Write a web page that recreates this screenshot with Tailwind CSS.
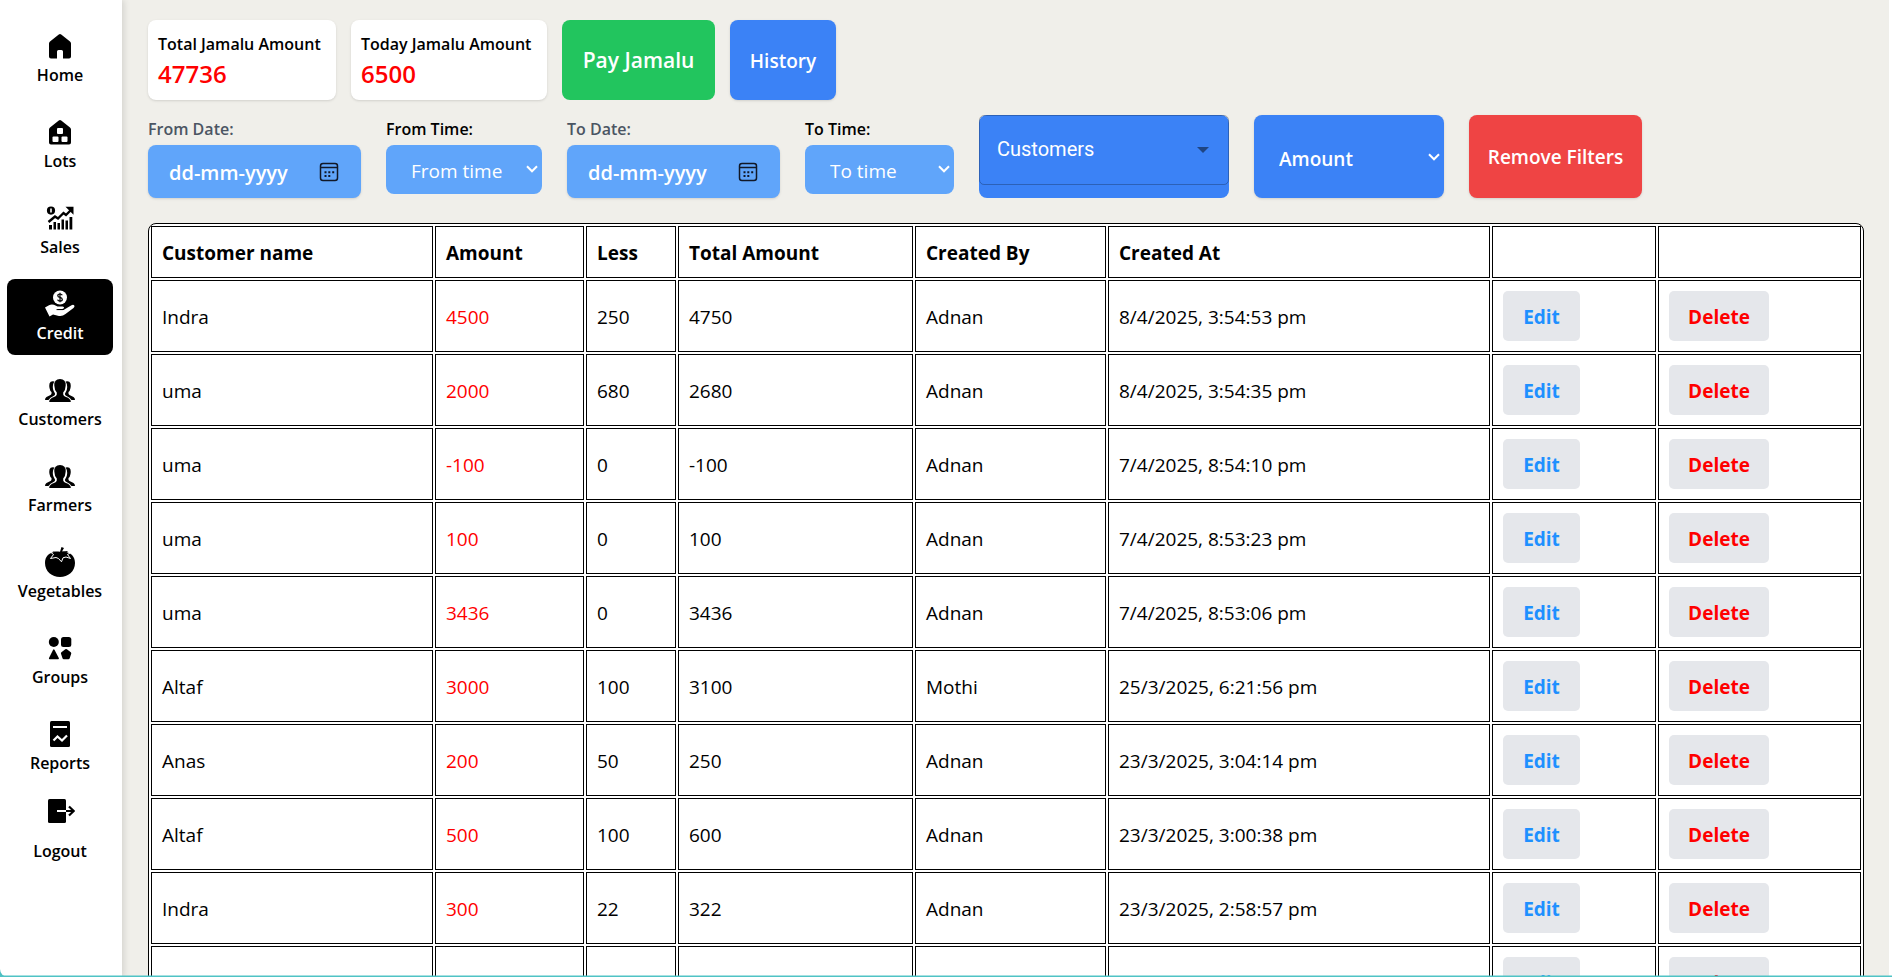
<!DOCTYPE html>
<html lang="en">
<head>
<meta charset="utf-8">
<meta name="viewport" content="width=device-width, initial-scale=1">
<title>Credit</title>
<script src="https://cdn.jsdelivr.net/npm/@tailwindcss/browser@4"></script>
</head>
<body class="h-screen overflow-hidden bg-white font-['Segoe_UI','Open_Sans','Noto_Sans',sans-serif] text-black">
<div class="relative flex h-screen overflow-hidden bg-[#4fc3c5]">
  <nav class="z-10 flex w-[122px] shrink-0 flex-col gap-[10px] rounded-bl-lg bg-white px-[7px] pt-[21px] text-base font-semibold shadow-[2px_0_6px_rgba(0,0,0,0.12)]">
    <a href="#" class="mr-[2px] flex h-[76px] flex-col items-center justify-center gap-[2px] rounded-lg leading-6">
      <svg class="size-[30px]" viewBox="0 0 30 30"><path d="M4 12.500Q4 11.300 5 10.500L13.800 3.600Q15 2.600 16.200 3.600L25 10.500Q26 11.300 26 12.500V25.500Q26 27.500 24 27.500H18V20.500Q18 19 16.500 19H13.500Q12 19 12 20.500V27.500H6Q4 27.500 4 25.500Z"/></svg>
      Home</a>
    <a href="#" class="mr-[2px] flex h-[76px] flex-col items-center justify-center gap-[2px] rounded-lg leading-6">
      <svg class="size-[30px]" viewBox="0 0 30 30"><path d="M4 12.500Q4 11.300 5 10.500L13.800 3.600Q15 2.600 16.200 3.600L25 10.500Q26 11.300 26 12.500V25.500Q26 27.500 24 27.500H6Q4 27.500 4 25.500Z"/><g fill="#fff"><rect x="12" y="11" width="6" height="6" rx="1"/><rect x="7.500" y="19.500" width="6" height="5.500" rx="1"/><rect x="16.500" y="19.500" width="6" height="5.500" rx="1"/></g></svg>
      Lots</a>
    <a href="#" class="mr-[2px] flex h-[76px] flex-col items-center justify-center gap-[2px] rounded-lg leading-6">
      <svg class="size-[30px]" viewBox="0 0 30 30"><path fill-rule="evenodd" d="M6 3.500a4 4 0 1 0 0 8.200a4 4 0 1 0 0-8.200ZM5.200 5.600H6.800V9.600H5.200Z"/><path d="M3.500 19L10 13.500L13 15.500L18.500 10L21 12L26.500 6.500" fill="none" stroke="#000" stroke-width="2.400"/><path d="M20.500 3.800H28.500V11.800L26 9.300L23 6.300Z"/><path d="M4 22H7V26.500H4ZM8.500 19H11V26.500H8.500ZM12.500 20H15V26.500H12.500ZM16.500 16.500H19V26.500H16.500ZM20.500 17.500H23V26.500H20.500ZM24.500 14H27.300V26.500H24.500Z"/></svg>
      Sales</a>
    <a href="#" aria-current="page" class="mr-[2px] flex h-[76px] flex-col items-center justify-center gap-[2px] rounded-lg bg-black leading-6 text-white">
      <svg class="size-[30px]" viewBox="0 0 30 30" fill="#fff"><circle cx="15" cy="8.500" r="7"/><path d="M17.300 6.200Q16.800 5 15 5Q12.800 5 12.800 6.700Q12.800 8 15 8.400Q17.300 8.900 17.300 10.400Q17.300 12 15 12Q13 12 12.600 10.600M15 3.800V13.200" fill="none" stroke="#000" stroke-width="1.200"/><path d="M0 18.500L4 16.200Q7.500 14.800 11 16.800L12.500 17.500H17.500Q19.500 17.700 19 19.200Q18.500 20 17 20H12.500V21H18.500L26.500 16.200Q28.500 15.300 29.300 16.600Q30 17.800 28.500 19L20.500 25Q17.500 27.600 14 27L8 25.500L4.500 27.500Z"/><path d="M11.500 20.600H18L20.500 18.500L24.500 15.800" fill="none" stroke="#000" stroke-width=".9"/></svg>
      Credit</a>
    <a href="#" class="mr-[2px] flex h-[76px] flex-col items-center justify-center gap-[2px] rounded-lg leading-6">
      <svg class="size-[30px]" viewBox="0 0 30 30"><g id="people"><path d="M9.500 6.500Q5.500 5.500 4.500 8.500Q4 11 4.500 13Q5 16 6.500 17Q7 19.500 4.500 20.500L1.500 22Q0 23 0 25H3.500Q5 22.500 8.500 21Q10.500 20 10 18.500Q8.500 16.500 8 14Q7.300 9 9.500 6.500Z"/><path d="M20.500 6.500Q24.500 5.500 25.500 8.500Q26 11 25.500 13Q25 16 23.500 17Q23 19.500 25.500 20.500L28.500 22Q30 23 30 25H26.500Q25 22.500 21.500 21Q19.500 20 20 18.500Q21.500 16.500 22 14Q22.700 9 20.500 6.500Z"/><path d="M15 4Q9 4 9.300 10.500Q9.500 15 11.800 17.500V19.500Q11.500 21 9 22Q4.500 23.500 4.200 26.500Q4.200 27 5 27H25Q25.800 27 25.800 26.500Q25.500 23.500 21 22Q18.500 21 18.200 19.500V17.500Q20.500 15 20.700 10.500Q21 4 15 4Z"/></g></svg>
      Customers</a>
    <a href="#" class="mr-[2px] flex h-[76px] flex-col items-center justify-center gap-[2px] rounded-lg leading-6">
      <svg class="size-[30px]" viewBox="0 0 30 30"><use href="#people"/></svg>
      Farmers</a>
    <a href="#" class="mr-[2px] flex h-[76px] flex-col items-center justify-center gap-[2px] rounded-lg leading-6">
      <svg class="size-[30px]" viewBox="0 0 30 30"><path d="M15 5C5 3.500 0 9 0 16C0 24.500 7 30 15 30S30 24.500 30 16C30 9 25 3.500 15 5Z"/><path d="M6 5.500L8.500 7.500L5.500 11.500L11 10.500L13.500 11.500L16.500 14.800L18 10.800L21 10L25.500 11.500L22.500 7.500L25 6" fill="none" stroke="#fff" stroke-width="1"/><path d="M16.500 0L19 1L17 4.500L23 4L20.500 6.500L22 9L18 8.500L16 12L13.500 9L9 9.500L11 7L7.500 4.500L15 4.800Z"/></svg>
      Vegetables</a>
    <a href="#" class="mr-[2px] flex h-[76px] flex-col items-center justify-center gap-[2px] rounded-lg leading-6">
      <svg class="size-[30px]" viewBox="0 0 30 30"><circle cx="8.800" cy="9" r="5"/><rect x="16" y="4" width="10.300" height="10" rx="2.500"/><path d="M8 17Q8.800 15.500 9.600 17L13.800 25Q14.300 26.300 13 26.300H4.800Q3.500 26.300 4 25ZM20.300 16.300Q21 15.700 21.900 16.300L25.800 19.200Q26.500 19.800 26.200 20.800L24.700 25.300Q24.400 26.300 23.300 26.300H18.900Q17.800 26.300 17.500 25.300L16 20.800Q15.700 19.800 16.400 19.200Z"/></svg>
      Groups</a>
    <a href="#" class="mr-[2px] flex h-[76px] flex-col items-center justify-center gap-[2px] rounded-lg leading-6">
      <svg class="size-[30px]" viewBox="0 0 30 30"><rect x="5" y="2" width="20" height="26" rx="1.500"/><path d="M8 8H22M8.500 21.500L12.500 17.500L17 21.500L22 16.500" fill="none" stroke="#fff" stroke-width="2.200"/></svg>
      Reports</a>
    <a href="#" class="mr-[2px] flex h-[76px] flex-col items-center justify-between rounded-lg pt-[1px] pb-[8px] leading-6">
      <svg class="size-[30px] shrink-0" viewBox="0 0 30 30"><rect x="3" y="3" width="18" height="24" rx="1.500"/><path d="M12 15H21" stroke="#fff" stroke-width="2"/><path d="M21 15H28.500M24 10.500L28.700 15L24 19.500" fill="none" stroke="#000" stroke-width="2.200"/></svg>
      Logout</a>
  </nav>

  <main class="min-w-0 flex-1 overflow-hidden border-r-[3px] border-white bg-[#f0efea] pt-5 pr-[25px] pl-[26px]">
    <section class="flex h-20 gap-[15px]">
      <div class="w-[188px] rounded-lg bg-white px-[10px] pt-[10px] whitespace-nowrap shadow-sm">
        <h2 class="text-base leading-7 font-semibold">Total Jamalu Amount</h2>
        <p class="text-2xl leading-8 font-semibold text-[#f00]">47736</p>
      </div>
      <div class="w-[196px] rounded-lg bg-white px-[10px] pt-[10px] whitespace-nowrap shadow-sm">
        <h2 class="text-base leading-7 font-semibold">Today Jamalu Amount</h2>
        <p class="text-2xl leading-8 font-semibold text-[#f00]">6500</p>
      </div>
      <button type="button" class="w-[153px] rounded-lg bg-[#22c55e] pt-[2px] text-[21px] font-semibold whitespace-nowrap text-white">Pay Jamalu</button>
      <button type="button" class="w-[106px] rounded-lg bg-[#3b82f6] pt-[2px] text-[19px] font-semibold text-white shadow-sm">History</button>
    </section>

    <form class="mt-[15px] flex h-[83px] gap-[25px]">
      <div class="flex w-[213px] flex-col">
        <label for="from-date" class="h-[30px] text-base leading-7 font-semibold text-[#4b5563]">From Date:</label>
        <div class="flex h-[53px] items-center rounded-lg bg-[#60a5fa] pr-[22px] pl-[21px] shadow-sm">
          <input id="from-date" type="text" placeholder="dd-mm-yyyy" class="min-w-0 flex-1 bg-transparent pt-[2px] text-[20px] font-semibold text-white outline-none placeholder:text-white">
          <button type="button" aria-label="Choose from date"><svg class="size-5" viewBox="0 0 20 20" fill="none" stroke="#111827" stroke-width="1.500"><rect x="1.500" y="1.500" width="17" height="17" rx="2.500"/><path d="M1.500 5.500H18.500"/><path d="M5.500 10.300H7.500M9.300 10.300H11.300M13.200 10.300H15.200M5.500 14H7.500M9.300 14H11.300" stroke-width="2"/></svg></button>
        </div>
      </div>
      <div class="flex w-[156px] flex-col">
        <label for="from-time" class="h-[30px] text-base leading-7 font-semibold">From Time:</label>
        <div class="relative h-[49px]">
          <select id="from-time" class="size-full appearance-none rounded-lg bg-[#60a5fa] pt-[3px] pl-[25px] text-[19px] text-white"><option>From time</option></select>
          <svg class="pointer-events-none absolute top-[20px] right-[4px] h-2 w-3" viewBox="0 0 12 8" fill="none" stroke="#fff" stroke-width="2"><path d="M1 1.300L6 6.300L11 1.300"/></svg>
        </div>
      </div>
      <div class="flex w-[213px] flex-col">
        <label for="to-date" class="h-[30px] text-base leading-7 font-semibold text-[#4b5563]">To Date:</label>
        <div class="flex h-[53px] items-center rounded-lg bg-[#60a5fa] pr-[22px] pl-[21px] shadow-sm">
          <input id="to-date" type="text" placeholder="dd-mm-yyyy" class="min-w-0 flex-1 bg-transparent pt-[2px] text-[20px] font-semibold text-white outline-none placeholder:text-white">
          <button type="button" aria-label="Choose to date"><svg class="size-5" viewBox="0 0 20 20" fill="none" stroke="#111827" stroke-width="1.500"><rect x="1.500" y="1.500" width="17" height="17" rx="2.500"/><path d="M1.500 5.500H18.500"/><path d="M5.500 10.300H7.500M9.300 10.300H11.300M13.200 10.300H15.200M5.500 14H7.500M9.300 14H11.300" stroke-width="2"/></svg></button>
        </div>
      </div>
      <div class="flex w-[149px] flex-col">
        <label for="to-time" class="h-[30px] text-base leading-7 font-semibold">To Time:</label>
        <div class="relative h-[49px]">
          <select id="to-time" class="size-full appearance-none rounded-lg bg-[#60a5fa] pt-[3px] pl-[25px] text-[19px] text-white"><option>To time</option></select>
          <svg class="pointer-events-none absolute top-[20px] right-[4px] h-2 w-3" viewBox="0 0 12 8" fill="none" stroke="#fff" stroke-width="2"><path d="M1 1.300L6 6.300L11 1.300"/></svg>
        </div>
      </div>
      <div class="w-[250px] rounded-lg bg-[#3b82f6]">
        <div class="flex h-[70px] items-center rounded-[5px] border border-black/25 pr-[19px] pl-[17px]">
          <input type="text" aria-label="Customers" placeholder="Customers" class="min-w-0 flex-1 bg-transparent pb-[2px] font-[Roboto] text-[20px] text-white outline-none placeholder:text-white">
          <button type="button" aria-label="Open customers"><svg class="h-[6px] w-3" viewBox="0 0 12 6"><path d="M0 0H12L6 6Z" fill="#1f4583"/></svg></button>
        </div>
      </div>
      <div class="relative w-[190px]">
        <select aria-label="Amount" class="size-full appearance-none rounded-lg bg-[#3b82f6] pt-[5px] pl-[25px] text-[19px] font-semibold text-white shadow-sm"><option>Amount</option></select>
        <svg class="pointer-events-none absolute top-[38px] right-[4px] h-2 w-3" viewBox="0 0 12 8" fill="none" stroke="#fff" stroke-width="2"><path d="M1 1.300L6 6.300L11 1.300"/></svg>
      </div>
      <button type="button" class="w-[173px] rounded-lg bg-[#ef4444] pt-[2px] text-[19px] font-semibold whitespace-nowrap text-white shadow-sm">Remove Filters</button>
    </form>

    <table class="mt-[25px] w-full table-fixed border-separate border-spacing-[2px] rounded-lg border border-black bg-white text-left text-[19px] [&_td]:border [&_td]:border-black [&_td]:px-[10px] [&_th]:border [&_th]:border-black [&_th]:px-[10px] [&_th]:pt-[3px]">
      <colgroup><col class="w-[282px]"><col class="w-[149px]"><col class="w-[90px]"><col class="w-[235px]"><col class="w-[191px]"><col class="w-[382px]"><col class="w-[164px]"><col class="w-[203px]"></colgroup>
      <thead><tr class="h-[52px]"><th>Customer name</th><th>Amount</th><th>Less</th><th>Total Amount</th><th>Created By</th><th>Created At</th><th></th><th></th></tr></thead>
      <tbody id="rows"></tbody>
    </table>
  </main>
  <div class="pointer-events-none absolute inset-x-0 bottom-0 z-20 h-[2px] border-b border-[#4fc3c5] bg-[#4fc3c5]/50"></div>
</div>
<template id="row">
  <tr class="h-[72px]"><td class="pt-[2px]"></td><td class="pt-[2px] text-[#f00]"></td><td class="pt-[2px]"></td><td class="pt-[2px]"></td><td class="pt-[2px]"></td><td class="pt-[2px]"></td>
    <td><button type="button" class="block h-[50px] w-[77px] rounded-[5px] bg-gray-200 pt-[2px] text-[19px] font-bold text-[#1e90ff]">Edit</button></td>
    <td><button type="button" class="block h-[50px] w-[100px] rounded-[5px] bg-gray-200 pt-[2px] text-[19px] font-bold text-[#f00]">Delete</button></td></tr>
</template>
<script>
const data = [
  ["Indra","4500","250","4750","Adnan","8/4/2025, 3:54:53 pm"],
  ["uma","2000","680","2680","Adnan","8/4/2025, 3:54:35 pm"],
  ["uma","-100","0","-100","Adnan","7/4/2025, 8:54:10 pm"],
  ["uma","100","0","100","Adnan","7/4/2025, 8:53:23 pm"],
  ["uma","3436","0","3436","Adnan","7/4/2025, 8:53:06 pm"],
  ["Altaf","3000","100","3100","Mothi","25/3/2025, 6:21:56 pm"],
  ["Anas","200","50","250","Adnan","23/3/2025, 3:04:14 pm"],
  ["Altaf","500","100","600","Adnan","23/3/2025, 3:00:38 pm"],
  ["Indra","300","22","322","Adnan","23/3/2025, 2:58:57 pm"],
  ["uma","100","100","200","Adnan","23/3/2025, 2:54:30 pm"]
];
const tpl = document.getElementById("row"), body = document.getElementById("rows");
for (const r of data) {
  const tr = tpl.content.cloneNode(true);
  const cells = tr.querySelectorAll("td");
  r.forEach((v, i) => { cells[i].textContent = v; });
  body.append(tr);
}
</script>
</body>
</html>
